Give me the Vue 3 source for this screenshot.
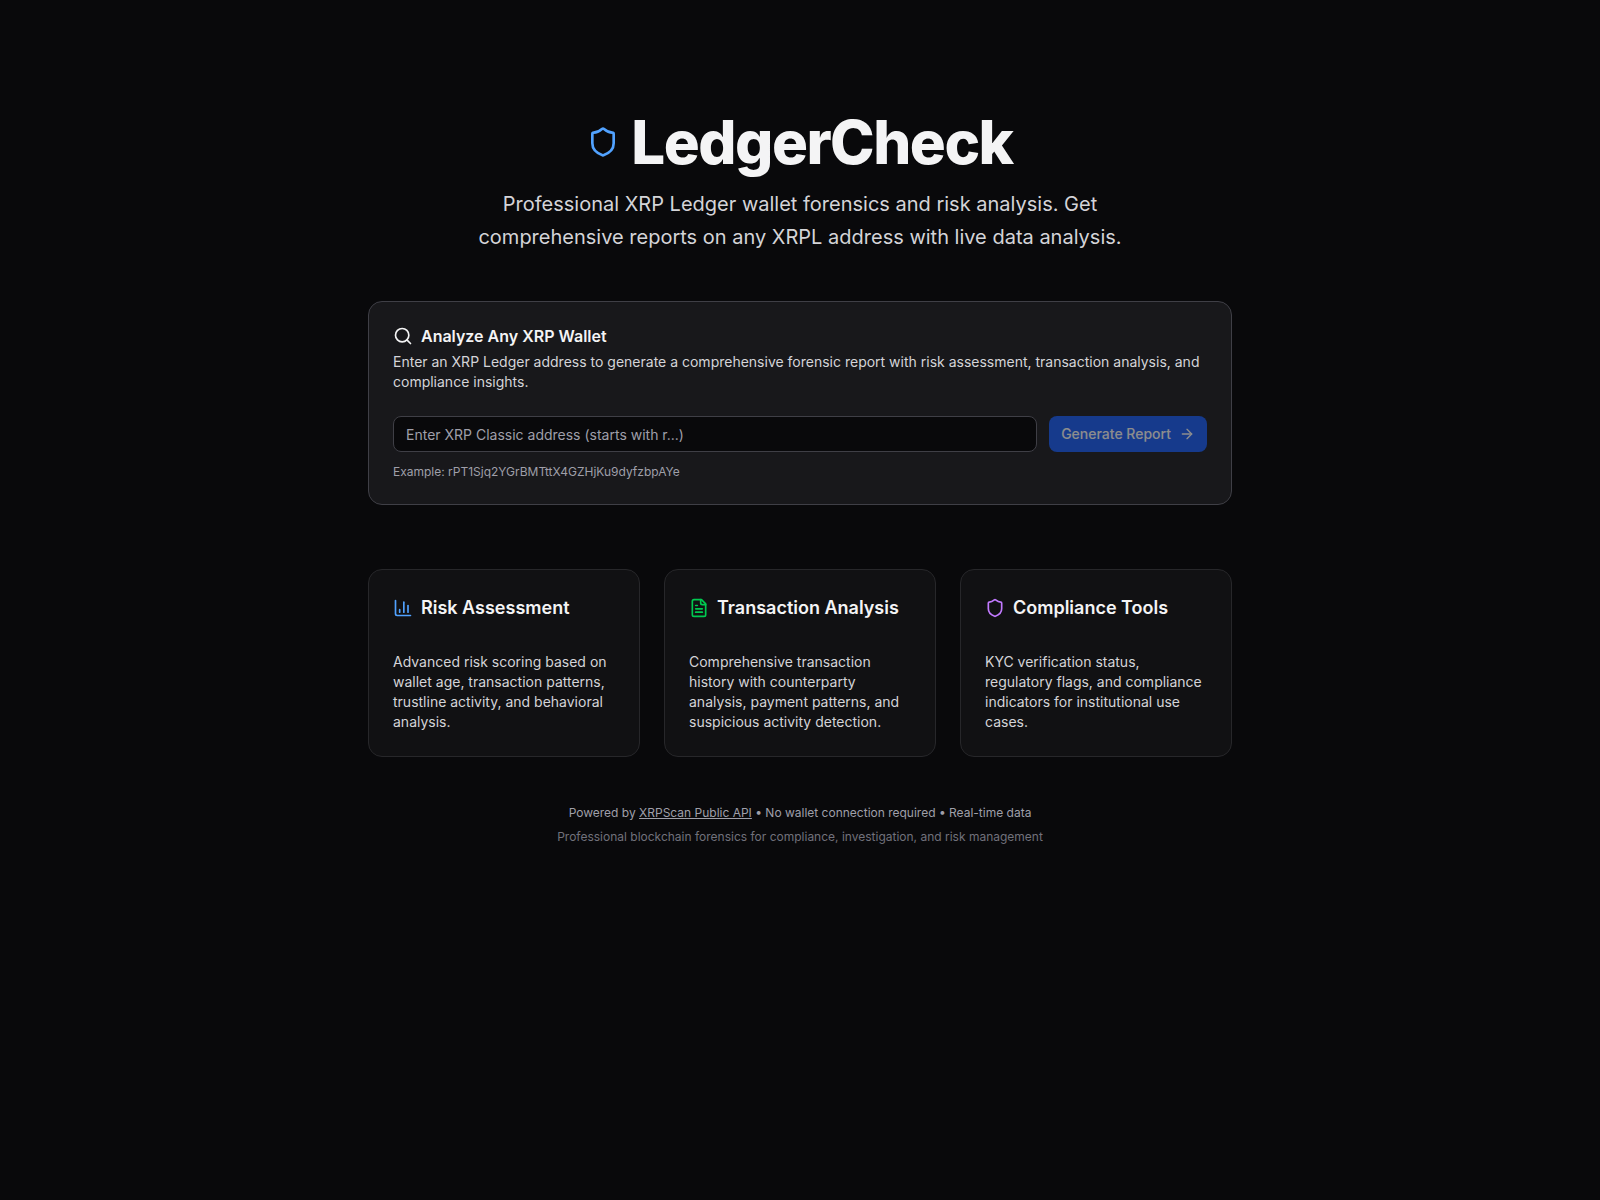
<script setup>
const features = [
  {
    title: 'Risk Assessment',
    icon: 'chart',
    text: 'Advanced risk scoring based on wallet age, transaction patterns, trustline activity, and behavioral analysis.'
  },
  {
    title: 'Transaction Analysis',
    icon: 'file',
    text: 'Comprehensive transaction history with counterparty analysis, payment patterns, and suspicious activity detection.'
  },
  {
    title: 'Compliance Tools',
    icon: 'shield',
    text: 'KYC verification status, regulatory flags, and compliance indicators for institutional use cases.'
  }
]
</script>

<template>
  <div class="page">
    <main class="container">
      <header class="hero">
        <h1 class="brand">
          <svg class="brand-icon" viewBox="0 0 24 24" fill="none" stroke="currentColor" stroke-width="2" stroke-linecap="round" stroke-linejoin="round">
            <path d="M20 13c0 5-3.5 7.5-7.66 8.95a1 1 0 0 1-.67-.01C7.5 20.5 4 18 4 13V6a1 1 0 0 1 1-1c2 0 4.5-1.2 6.24-2.72a1.17 1.17 0 0 1 1.52 0C14.51 3.81 17 5 19 5a1 1 0 0 1 1 1z" />
          </svg>
          LedgerCheck
        </h1>
        <p class="lead">
          Professional XRP Ledger wallet forensics and risk analysis. Get comprehensive reports on any XRPL address with live data analysis.
        </p>
      </header>

      <section class="search-card">
        <h2 class="search-title">
          <svg class="search-icon" viewBox="0 0 24 24" fill="none" stroke="currentColor" stroke-width="2" stroke-linecap="round" stroke-linejoin="round">
            <path d="m21 21-4.34-4.34" />
            <circle cx="11" cy="11" r="8" />
          </svg>
          Analyze Any XRP Wallet
        </h2>
        <p class="search-desc">
          Enter an XRP Ledger address to generate a comprehensive forensic report with risk assessment, transaction analysis, and compliance insights.
        </p>
        <form class="search-form" @submit.prevent>
          <input class="address-input" type="text" placeholder="Enter XRP Classic address (starts with r...)" />
          <button class="submit-btn" type="submit" disabled>
            Generate Report
            <svg class="arrow" viewBox="0 0 24 24" fill="none" stroke="currentColor" stroke-width="2" stroke-linecap="round" stroke-linejoin="round">
              <path d="M5 12h14" />
              <path d="m12 5 7 7-7 7" />
            </svg>
          </button>
        </form>
        <p class="example">Example: rPT1Sjq2YGrBMTttX4GZHjKu9dyfzbpAYe</p>
      </section>

      <section class="features">
        <article v-for="item in features" :key="item.title" class="feature">
          <h3 class="feature-title">
            <svg v-if="item.icon === 'chart'" class="feature-icon blue" viewBox="0 0 24 24" fill="none" stroke="currentColor" stroke-width="2" stroke-linecap="round" stroke-linejoin="round">
              <path d="M3 3v16a2 2 0 0 0 2 2h16" />
              <path d="M18 17V9" />
              <path d="M13 17V5" />
              <path d="M8 17v-3" />
            </svg>
            <svg v-else-if="item.icon === 'file'" class="feature-icon green" viewBox="0 0 24 24" fill="none" stroke="currentColor" stroke-width="2" stroke-linecap="round" stroke-linejoin="round">
              <path d="M15 2H6a2 2 0 0 0-2 2v16a2 2 0 0 0 2 2h12a2 2 0 0 0 2-2V7Z" />
              <path d="M14 2v4a2 2 0 0 0 2 2h4" />
              <path d="M10 9H8" />
              <path d="M16 13H8" />
              <path d="M16 17H8" />
            </svg>
            <svg v-else class="feature-icon purple" viewBox="0 0 24 24" fill="none" stroke="currentColor" stroke-width="2" stroke-linecap="round" stroke-linejoin="round">
              <path d="M20 13c0 5-3.5 7.5-7.66 8.95a1 1 0 0 1-.67-.01C7.5 20.5 4 18 4 13V6a1 1 0 0 1 1-1c2 0 4.5-1.2 6.24-2.72a1.17 1.17 0 0 1 1.52 0C14.51 3.81 17 5 19 5a1 1 0 0 1 1 1z" />
            </svg>
            {{ item.title }}
          </h3>
          <p class="feature-text">{{ item.text }}</p>
        </article>
      </section>

      <footer class="footer">
        <p class="footer-main">
          Powered by <a href="#" class="footer-link">XRPScan Public API</a> • No wallet connection required • Real-time data
        </p>
        <p class="footer-sub">Professional blockchain forensics for compliance, investigation, and risk management</p>
      </footer>
    </main>
  </div>
</template>

<style>
html,
body {
  margin: 0;
  background: #09090b;
}
</style>

<style scoped>
.page {
  min-height: 100vh;
  background: #09090b;
  color: #fafafa;
  font-family: Inter, "Liberation Sans", sans-serif;
}

.container {
  box-sizing: border-box;
  max-width: 896px;
  margin: 0 auto;
  padding: 112px 16px 0;
}

.hero {
  text-align: center;
  margin-bottom: 48px;
}

.brand {
  display: flex;
  align-items: center;
  justify-content: center;
  gap: 12px;
  margin: 0 0 16px;
  font-size: 60px;
  line-height: 60px;
  font-weight: 800;
  letter-spacing: -1.5px;
  color: #f4f4f5;
}

.brand-icon {
  width: 32px;
  height: 32px;
  color: #51a2ff;
}

.lead {
  max-width: 672px;
  margin: 0 auto;
  font-size: 20px;
  line-height: 32.5px;
  color: #d4d4d8;
}

.search-card {
  border: 1px solid #3f3f46;
  border-radius: 14px;
  background: #18181b;
  padding: 24px;
  margin-bottom: 64px;
}

.search-title {
  display: flex;
  align-items: center;
  gap: 8px;
  margin: 0 0 6px;
  font-size: 16px;
  line-height: 20px;
  font-weight: 600;
  color: #f4f4f5;
}

.search-icon {
  width: 20px;
  height: 20px;
}

.search-desc {
  margin: 0;
  font-size: 14px;
  line-height: 20px;
  color: #d4d4d8;
}

.search-form {
  display: flex;
  gap: 12px;
  margin-top: 24px;
}

.address-input {
  flex: 1;
  min-width: 0;
  box-sizing: border-box;
  height: 36px;
  padding: 4px 12px;
  border: 1px solid #3f3f46;
  border-radius: 8px;
  background: #09090b;
  color: #fafafa;
  font-family: inherit;
  font-size: 14px;
  outline: none;
}

.address-input::placeholder {
  color: #9f9fa9;
}

.submit-btn {
  display: inline-flex;
  align-items: center;
  gap: 8px;
  height: 36px;
  padding: 0 12px;
  border: none;
  border-radius: 8px;
  background: #155dfc;
  color: #fff;
  font-family: inherit;
  font-size: 14px;
  line-height: 20px;
  font-weight: 500;
  opacity: 0.5;
}

.arrow {
  width: 16px;
  height: 16px;
}

.example {
  margin: 12px 0 0;
  font-size: 12px;
  line-height: 16px;
  color: #9f9fa9;
}

.features {
  display: grid;
  grid-template-columns: repeat(3, 1fr);
  gap: 24px;
  margin-bottom: 48px;
}

.feature {
  border: 1px solid #27272a;
  border-radius: 14px;
  background: #111113;
  padding: 24px;
}

.feature-title {
  display: flex;
  align-items: center;
  gap: 8px;
  margin: 0 0 30px;
  font-size: 18px;
  line-height: 28px;
  font-weight: 600;
  color: #f4f4f5;
}

.feature-icon {
  width: 20px;
  height: 20px;
  flex-shrink: 0;
}

.blue {
  color: #51a2ff;
}

.green {
  color: #00c950;
}

.purple {
  color: #c27aff;
}

.feature-text {
  margin: 0;
  font-size: 14px;
  line-height: 20px;
  color: #d4d4d8;
}

.footer {
  text-align: center;
  font-size: 12px;
  line-height: 16px;
}

.footer-main {
  margin: 0 0 8px;
  color: #9f9fa9;
}

.footer-link {
  color: #9f9fa9;
  text-decoration: underline;
}

.footer-sub {
  margin: 0;
  color: #71717b;
}
</style>
